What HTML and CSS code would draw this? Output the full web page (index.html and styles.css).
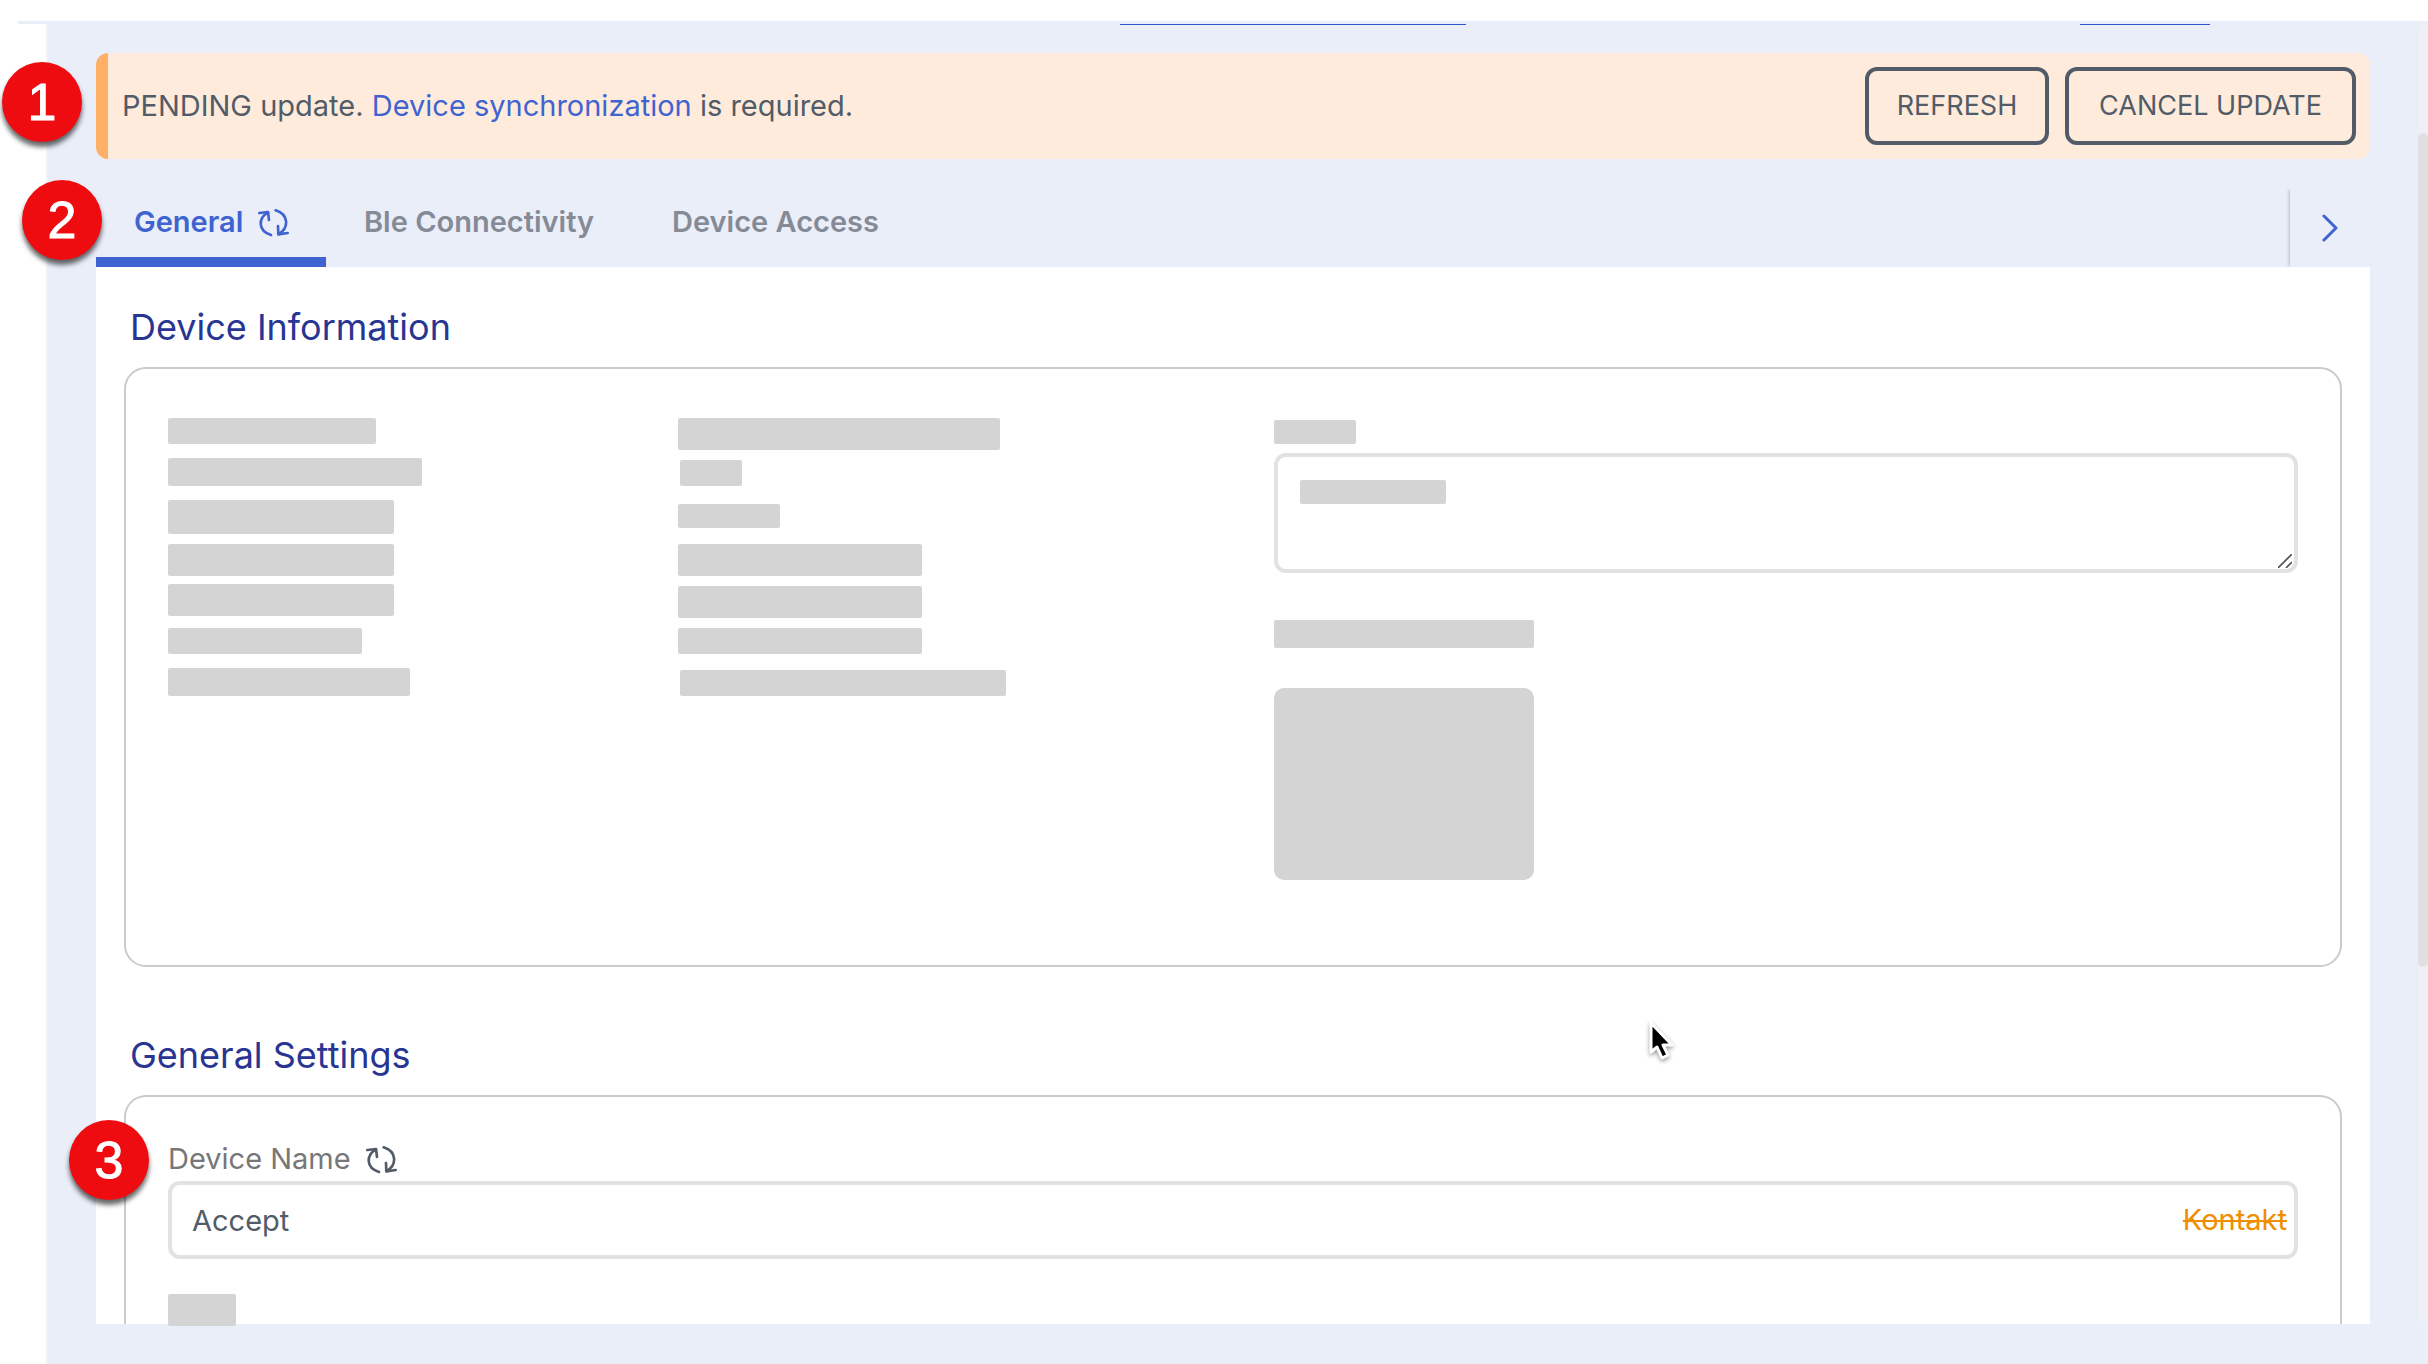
FILE: index.html
```html
<!DOCTYPE html>
<html lang="en">
<head>
<meta charset="utf-8">
<meta name="viewport" content="width=device-width, initial-scale=1">
<title>Device details</title>
<link rel="stylesheet" href="styles.css">
</head>
<body>
<svg class="defs" aria-hidden="true">
  <symbol id="sync" viewBox="0 0 93 84">
    <g fill="none" stroke="currentColor" stroke-width="8" stroke-linecap="round" stroke-linejoin="round">
      <path d="M4 12 L30 9 L33 33"/>
      <path d="M30 10 C-1 28 0 66 39 78"/>
      <path d="M53 4 C92 16 94 57 62 75"/>
      <path d="M89 72 L61 76 L60 51"/>
    </g>
  </symbol>
</svg>
<div class="app">
  <div class="toolbar"></div>
  <main class="main">
    <div class="toolbar-edges" aria-hidden="true">
      <span class="edge edge-wide"></span>
      <span class="edge edge-narrow"></span>
    </div>

    <section class="banner">
      <span class="marker marker-banner">1</span>
      <p class="banner-text">PENDING update. <a href="#sync-help">Device synchronization</a> is required.</p>
      <div class="banner-actions">
        <button type="button" class="btn btn-refresh">REFRESH</button>
        <button type="button" class="btn btn-cancel">CANCEL UPDATE</button>
      </div>
    </section>

    <nav class="tabs">
      <span class="marker marker-tabs">2</span>
      <a class="tab tab-active" href="#general">General <svg class="sync"><use href="#sync"/></svg></a>
      <a class="tab tab-ble" href="#ble">Ble Connectivity</a>
      <a class="tab" href="#access">Device Access</a>
      <button type="button" class="tabs-next" aria-label="Next tabs">
        <svg viewBox="0 0 16 28"><path d="M2 2 L14 14 L2 26" fill="none" stroke="currentColor" stroke-width="3" stroke-linecap="round" stroke-linejoin="round"/></svg>
      </button>
    </nav>

    <div class="panel" id="general">
      <h2 class="title">Device Information</h2>
      <section class="card info">
        <div class="bars bars-left">
          <span class="bar h26" style="width:208px"></span>
          <span class="bar h28" style="width:254px"></span>
          <span class="bar h34" style="width:226px"></span>
          <span class="bar h32" style="width:226px"></span>
          <span class="bar h32" style="width:226px"></span>
          <span class="bar h26" style="width:194px"></span>
          <span class="bar h28" style="width:242px"></span>
        </div>
        <div class="bars bars-right">
          <span class="bar h32" style="width:322px"></span>
          <span class="bar h26 bar-value" style="width:62px"></span>
          <span class="bar h24" style="width:102px"></span>
          <span class="bar h32" style="width:244px"></span>
          <span class="bar h32" style="width:244px"></span>
          <span class="bar h26" style="width:244px"></span>
          <span class="bar h26 bar-value" style="width:326px"></span>
        </div>
        <div class="notes">
          <span class="bar h24" style="width:82px"></span>
          <div class="notes-box">
            <textarea class="notes-input" aria-label="Notes"></textarea>
            <span class="bar h24 notes-value" style="width:146px"></span>
            <svg class="grip" viewBox="0 0 14 14"><path d="M0 14 L14 0 M8 14 L14 8" stroke="#555" stroke-width="1.6"/></svg>
          </div>
          <span class="bar h28 photo-label"></span>
          <span class="photo"></span>
        </div>
      </section>

      <h2 class="title title-next">General Settings</h2>
      <section class="card settings">
        <span class="marker marker-field">3</span>
        <label class="label" for="device-name">Device Name <svg class="sync"><use href="#sync"/></svg></label>
        <div class="field">
          <input class="input" id="device-name" type="text" value="Accept">
          <del class="old-value">Kontakt</del>
        </div>
        <span class="bar h32 next-label" style="width:68px"></span>
      </section>
    </div>

    <div class="scroll-track"><span class="scroll-thumb"></span></div>
    <svg class="pointer" viewBox="0 0 30 40"><path d="M5 3 V32 L11 27 L16 38 L22 35 L17 25 H26 Z" fill="#000" stroke="#fff" stroke-width="3" stroke-linejoin="round"/></svg>
  </main>
</div>
</body>
</html>
```
FILE: styles.css
```css
*, *::before, *::after { box-sizing: border-box; }

:root {
  --blue: #3f63d0;
  --navy: #283593;
  --slate: #515c68;
  --surface: #eaeef9;
  --bar: #d4d4d4;
}

body {
  margin: 0;
  background: #fff;
  color: var(--slate);
  font: 29px/40px Inter, "Liberation Sans", sans-serif;
}

.defs { position: absolute; width: 0; height: 0; }

.app {
  display: flex;
  flex-direction: column;
  min-height: 100vh;
  padding-top: 21px;
}

.toolbar { height: 3px; margin-left: 18px; background: var(--surface); }

.main {
  position: relative;
  flex: 1;
  margin-left: 46px;
  padding: 0 58px 40px 48px;
  border-left: 2px solid #f2f2f4;
  background: var(--surface);
}

/* Lower edges of the toolbar buttons that are scrolled out of view */
.toolbar-edges {
  display: flex;
  justify-content: flex-end;
  gap: 614px;
  height: 29px;
  padding-right: 160px;
}
.edge { height: 1px; background: #2f56cc; }
.edge-wide { width: 346px; }
.edge-narrow { width: 130px; }

.banner {
  position: relative;
  display: flex;
  align-items: center;
  justify-content: space-between;
  height: 106px;
  padding: 0 14px;
  border-left: 12px solid #ffb067;
  border-radius: 12px;
  background: #ffebdb;
}
.banner-text { margin: 0; }
.banner-text a { color: var(--blue); text-decoration: none; }
.banner-actions { display: flex; gap: 16px; }

.btn {
  height: 78px;
  padding: 0;
  border: 4px solid var(--slate);
  border-radius: 12px;
  background: none;
  color: inherit;
  font: inherit;
  font-size: 27px;
}
.btn-refresh { width: 184px; }
.btn-cancel { width: 291px; }

.tabs {
  position: relative;
  display: flex;
  height: 78px;
  margin-top: 30px;
  color: #858b96;
  font-weight: 600;
}
.tab {
  display: flex;
  align-items: flex-start;
  padding: 13px 38px 0;
  color: inherit;
  text-decoration: none;
}
.tab-active {
  width: 230px;
  padding-right: 0;
  border-bottom: 10px solid var(--blue);
  color: var(--blue);
}
.tab-ble { width: 308px; }
.sync { width: 31px; height: 28px; margin: 7px 0 0 15px; }

.tabs-next {
  width: 80px;
  margin-left: auto;
  padding: 0;
  border: 0;
  background: var(--surface);
  box-shadow: -1px 0 3px #b8bcc8;
  clip-path: inset(0 0 0 -6px);
  color: var(--blue);
}
.tabs-next svg { display: block; width: 16px; height: 28px; margin: 0 auto; }

.panel { display: flow-root; padding: 36px 28px 0; background: #fff; }

.title {
  margin: 0 0 16px;
  padding-left: 6px;
  color: var(--navy);
  font-size: 36px;
  font-weight: 400;
  line-height: 48px;
}
.title-next { margin-top: 64px; }

.card { border: 2px solid #cacacf; border-radius: 22px; }

.info {
  display: grid;
  grid-template-columns: 510fr 596fr 1024fr;
  min-height: 600px;
  padding: 49px 42px 85px;
}
.bars { display: grid; align-content: start; }
.bars-left { grid-template-rows: 40px 42px 44px 40px 44px 40px 28px; }
.bars-right { grid-template-rows: 42px 44px 40px 42px 42px 42px 26px; }

.bar { display: block; border-radius: 2px; background: var(--bar); }
.bar-value { margin-left: 2px; }
.h24 { height: 24px; }
.h26 { height: 26px; }
.h28 { height: 28px; }
.h32 { height: 32px; }
.h34 { height: 34px; }

.notes { padding-top: 2px; }
.notes-box { position: relative; margin-top: 9px; }
.notes-input {
  display: block;
  width: 100%;
  height: 120px;
  padding: 20px;
  border: 4px solid #e2e2e2;
  border-radius: 12px;
  background: none;
  font: inherit;
  resize: none;
}
.notes-value { position: absolute; top: 27px; left: 26px; }
.grip { position: absolute; right: 6px; bottom: 5px; width: 14px; height: 14px; }
.photo-label { width: 260px; margin-top: 47px; }
.photo {
  display: block;
  width: 260px;
  height: 192px;
  margin-top: 40px;
  border-radius: 10px;
  background: var(--bar);
}

.settings {
  position: relative;
  display: flow-root;
  padding: 42px 42px 0;
  border-bottom: 0;
  border-radius: 22px 22px 0 0;
}
.label { display: flex; color: #777; }
.label .sync { color: var(--slate); }
.field { position: relative; margin-top: 2px; }
.input {
  display: block;
  width: 100%;
  height: 78px;
  padding: 0 140px 0 20px;
  border: 4px solid #e2e2e2;
  border-radius: 12px;
  background: #fff;
  color: var(--slate);
  font: inherit;
}
.old-value {
  position: absolute;
  top: 19px;
  right: 11px;
  color: #ee8e00;
  text-decoration-thickness: 2px;
}
.next-label { margin: 35px 0 -2px; }

/* Numbered call-outs */
.marker {
  position: absolute;
  z-index: 1;
  width: 80px;
  height: 80px;
  border-radius: 50%;
  background: #ee0c11;
  box-shadow: 0 5px 5px #00000099;
  color: #fff;
  font: 52px/80px "Liberation Sans", Arial, sans-serif;
  text-align: center;
  -webkit-text-stroke: 1px #fff;
}
.marker-banner { top: 9px; left: -106px; }
.marker-tabs { top: -9px; left: -74px; }
.marker-field { top: 23px; left: -57px; }

.scroll-track {
  position: absolute;
  top: 0;
  right: 0;
  bottom: 40px;
  width: 10px;
  padding-top: 109px;
  border-radius: 6px;
  background: #eeeff7;
}
.scroll-thumb { display: block; height: 834px; border-radius: 6px; background: #e0e0e0; }

.pointer {
  position: absolute;
  top: 996px;
  left: 1598px;
  width: 30px;
  height: 40px;
  filter: drop-shadow(0 2px 2px #00000066);
}
```
